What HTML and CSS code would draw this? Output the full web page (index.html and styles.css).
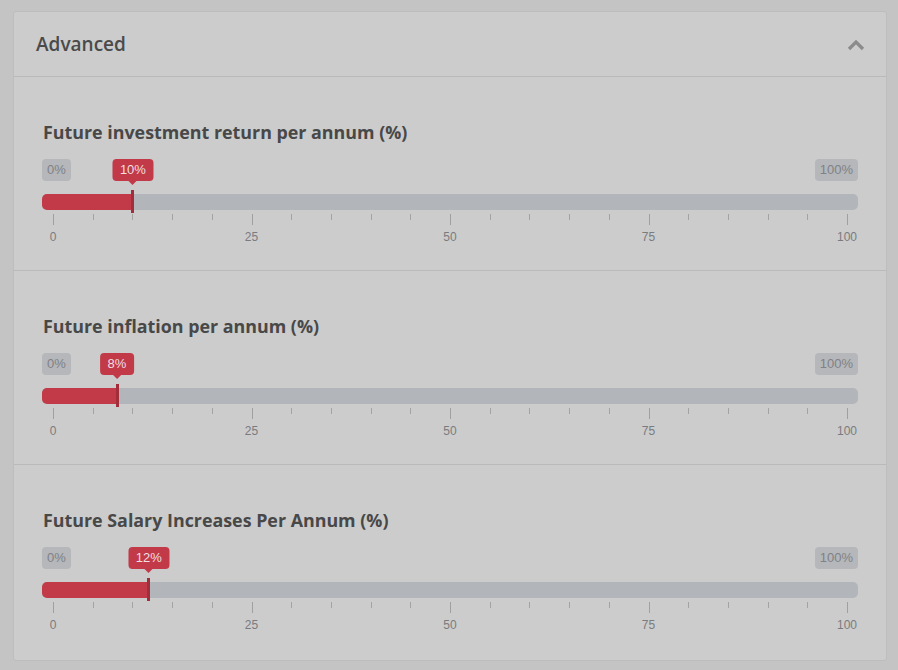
FILE: index.html
```html
<!DOCTYPE html>
<html>
<head>
<meta charset="utf-8">
<link rel="stylesheet" href="styles.css">
</head>
<body>
<div class="panel">
  <div class="panel-header">
    <span class="panel-title">Advanced</span>
    <svg class="chevron" width="18" height="12" viewBox="0 0 18 12"><path d="M2 10 L9 3 L16 10" fill="none" stroke="#8b8b8b" stroke-width="3.2"/></svg>
  </div>

  <div class="section">
    <div class="section-title">Future investment return per annum (%)</div>
    <div class="slider">
      <div class="limits"><span class="limit">0%</span><span class="limit">100%</span></div>
      <span class="bubble" style="left: calc(11px + 794px * 0.10)">10%</span>
      <div class="track"><div class="fill" style="width: calc(11px + 794px * 0.10)"></div><div class="handle" style="left: calc(11px + 794px * 0.10)"></div></div>
      <div class="grid">
        <span class="tick major" style="left:11px"></span><span class="tick" style="left:50.7px"></span><span class="tick" style="left:90.4px"></span><span class="tick" style="left:130.1px"></span><span class="tick" style="left:169.8px"></span>
        <span class="tick major" style="left:209.5px"></span><span class="tick" style="left:249.2px"></span><span class="tick" style="left:288.9px"></span><span class="tick" style="left:328.6px"></span><span class="tick" style="left:368.3px"></span>
        <span class="tick major" style="left:408px"></span><span class="tick" style="left:447.7px"></span><span class="tick" style="left:487.4px"></span><span class="tick" style="left:527.1px"></span><span class="tick" style="left:566.8px"></span>
        <span class="tick major" style="left:606.5px"></span><span class="tick" style="left:646.2px"></span><span class="tick" style="left:685.9px"></span><span class="tick" style="left:725.6px"></span><span class="tick" style="left:765.3px"></span>
        <span class="tick major" style="left:805px"></span>
        <span class="gl" style="left:11px">0</span><span class="gl" style="left:209.5px">25</span><span class="gl" style="left:408px">50</span><span class="gl" style="left:606.5px">75</span><span class="gl" style="left:805px">100</span>
      </div>
    </div>
  </div>

  <div class="section">
    <div class="section-title">Future inflation per annum (%)</div>
    <div class="slider">
      <div class="limits"><span class="limit">0%</span><span class="limit">100%</span></div>
      <span class="bubble" style="left: calc(11px + 794px * 0.08)">8%</span>
      <div class="track"><div class="fill" style="width: calc(11px + 794px * 0.08)"></div><div class="handle" style="left: calc(11px + 794px * 0.08)"></div></div>
      <div class="grid">
        <span class="tick major" style="left:11px"></span><span class="tick" style="left:50.7px"></span><span class="tick" style="left:90.4px"></span><span class="tick" style="left:130.1px"></span><span class="tick" style="left:169.8px"></span>
        <span class="tick major" style="left:209.5px"></span><span class="tick" style="left:249.2px"></span><span class="tick" style="left:288.9px"></span><span class="tick" style="left:328.6px"></span><span class="tick" style="left:368.3px"></span>
        <span class="tick major" style="left:408px"></span><span class="tick" style="left:447.7px"></span><span class="tick" style="left:487.4px"></span><span class="tick" style="left:527.1px"></span><span class="tick" style="left:566.8px"></span>
        <span class="tick major" style="left:606.5px"></span><span class="tick" style="left:646.2px"></span><span class="tick" style="left:685.9px"></span><span class="tick" style="left:725.6px"></span><span class="tick" style="left:765.3px"></span>
        <span class="tick major" style="left:805px"></span>
        <span class="gl" style="left:11px">0</span><span class="gl" style="left:209.5px">25</span><span class="gl" style="left:408px">50</span><span class="gl" style="left:606.5px">75</span><span class="gl" style="left:805px">100</span>
      </div>
    </div>
  </div>

  <div class="section">
    <div class="section-title">Future Salary Increases Per Annum (%)</div>
    <div class="slider">
      <div class="limits"><span class="limit">0%</span><span class="limit">100%</span></div>
      <span class="bubble" style="left: calc(11px + 794px * 0.12)">12%</span>
      <div class="track"><div class="fill" style="width: calc(11px + 794px * 0.12)"></div><div class="handle" style="left: calc(11px + 794px * 0.12)"></div></div>
      <div class="grid">
        <span class="tick major" style="left:11px"></span><span class="tick" style="left:50.7px"></span><span class="tick" style="left:90.4px"></span><span class="tick" style="left:130.1px"></span><span class="tick" style="left:169.8px"></span>
        <span class="tick major" style="left:209.5px"></span><span class="tick" style="left:249.2px"></span><span class="tick" style="left:288.9px"></span><span class="tick" style="left:328.6px"></span><span class="tick" style="left:368.3px"></span>
        <span class="tick major" style="left:408px"></span><span class="tick" style="left:447.7px"></span><span class="tick" style="left:487.4px"></span><span class="tick" style="left:527.1px"></span><span class="tick" style="left:566.8px"></span>
        <span class="tick major" style="left:606.5px"></span><span class="tick" style="left:646.2px"></span><span class="tick" style="left:685.9px"></span><span class="tick" style="left:725.6px"></span><span class="tick" style="left:765.3px"></span>
        <span class="tick major" style="left:805px"></span>
        <span class="gl" style="left:11px">0</span><span class="gl" style="left:209.5px">25</span><span class="gl" style="left:408px">50</span><span class="gl" style="left:606.5px">75</span><span class="gl" style="left:805px">100</span>
      </div>
    </div>
  </div>
</div>
</body>
</html>
```

FILE: styles.css
```css
* { box-sizing: border-box; }
html, body { margin: 0; padding: 0; }
body {
  background: #c4c4c4;
  font-family: "Open Sans", "Liberation Sans", sans-serif;
  width: 898px;
  height: 670px;
  overflow: hidden;
  padding-top: 11px;
  padding-left: 13px;
}
.panel {
  width: 874px;
  height: 650px;
  background: #cccccc;
  border: 1px solid #bdbdbd;
  border-radius: 3px;
}
.panel-header {
  height: 65px;
  border-bottom: 1px solid #bababa;
  display: flex;
  align-items: center;
  justify-content: space-between;
  padding: 0 21px 0 22px;
}
.panel-title {
  font-size: 19px;
  font-weight: 600;
  color: #4a4a4a;
}
.chevron { margin-top: 1px; }
.section {
  height: 194px;
  border-bottom: 1px solid #bababa;
  padding: 43px 27px 0 28px;
}
.section:last-child { border-bottom: none; }
.section-title {
  font-size: 17.85px;
  font-weight: 700;
  color: #484848;
  line-height: 24px;
  padding-left: 1px;
}
.slider {
  position: relative;
  width: 816px;
  margin-top: 15px;
  font-family: "Liberation Sans", Arial, sans-serif;
}
.limits {
  display: flex;
  justify-content: space-between;
  height: 22px;
}
.limit {
  background: #b5b7ba;
  color: #7f8287;
  font-size: 13px;
  line-height: 16px;
  padding: 3px 5px;
  border-radius: 4px;
}
.bubble {
  position: absolute;
  top: 0;
  transform: translateX(-50%);
  background: #c23a48;
  color: #f1dfe1;
  font-size: 13px;
  line-height: 16px;
  padding: 3px 7.5px;
  border-radius: 4px;
  margin-left: 0.5px;
}
.bubble::after {
  content: "";
  position: absolute;
  left: 50%;
  bottom: -4px;
  margin-left: -4px;
  border-left: 4px solid transparent;
  border-right: 4px solid transparent;
  border-top: 4px solid #c23a48;
}
.track {
  position: relative;
  margin-top: 13px;
  height: 16px;
  background: #b2b5b9;
  border-radius: 5px;
}
.fill {
  height: 16px;
  background: #c23a48;
  border-radius: 5px 0 0 5px;
}
.handle {
  position: absolute;
  top: -4px;
  width: 3px;
  height: 23px;
  margin-left: -1px;
  background: #a32e3b;
}
.grid {
  position: relative;
  height: 36px;
}
.tick {
  position: absolute;
  top: 4px;
  width: 1px;
  height: 6px;
  background: #a3a3a3;
}
.tick.major { height: 11px; background: #a0a0a0; }
.gl {
  position: absolute;
  top: 20px;
  transform: translateX(-50%);
  font-size: 12px;
  line-height: 14px;
  color: #7a7b7f;
}
```
